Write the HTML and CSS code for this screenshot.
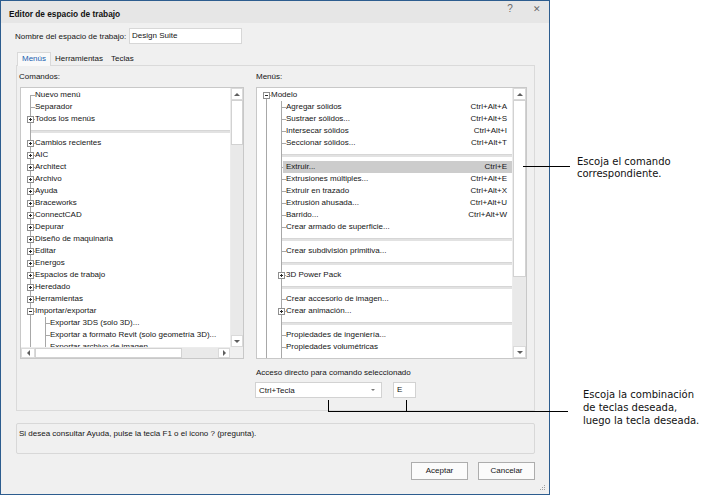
FILE: index.html
```html
<!DOCTYPE html>
<html lang="es">
<head>
<meta charset="utf-8">
<title>Editor de espacio de trabajo</title>
<link rel="stylesheet" href="styles.css">
</head>
<body>
<div class="page">
  <div class="dialog">
    <div class="titlebar">
      <span class="title">Editor de espacio de trabajo</span>
      <span class="tb-btn">?</span>
      <span class="tb-btn close">✕</span>
    </div>
    <div class="content">
      <div class="name-row">
        <span class="name-label">Nombre del espacio de trabajo:</span>
        <div class="input">Design Suite</div>
      </div>
      <div class="tabs">
        <span class="tab active">Menús</span>
        <span class="tab">Herramientas</span>
        <span class="tab">Teclas</span>
      </div>
      <div class="panel">
        <div class="col col-left">
          <div class="cap">Comandos:</div>
          <div class="tree tree-left">
            <div class="view">
              <div class="r"><span class="c first"></span><span class="t">Nuevo menú</span></div>
              <div class="r"><span class="c"></span><span class="t">Separador</span></div>
              <div class="r"><span class="c"><i class="bx plus"></i></span><span class="t">Todos los menús</span></div>
              <div class="r"><span class="v"></span><span class="sl"></span></div>
              <div class="r"><span class="c"><i class="bx plus"></i></span><span class="t">Cambios recientes</span></div>
              <div class="r"><span class="c"><i class="bx plus"></i></span><span class="t">AIC</span></div>
              <div class="r"><span class="c"><i class="bx plus"></i></span><span class="t">Architect</span></div>
              <div class="r"><span class="c"><i class="bx plus"></i></span><span class="t">Archivo</span></div>
              <div class="r"><span class="c"><i class="bx plus"></i></span><span class="t">Ayuda</span></div>
              <div class="r"><span class="c"><i class="bx plus"></i></span><span class="t">Braceworks</span></div>
              <div class="r"><span class="c"><i class="bx plus"></i></span><span class="t">ConnectCAD</span></div>
              <div class="r"><span class="c"><i class="bx plus"></i></span><span class="t">Depurar</span></div>
              <div class="r"><span class="c"><i class="bx plus"></i></span><span class="t">Diseño de maquinaria</span></div>
              <div class="r"><span class="c"><i class="bx plus"></i></span><span class="t">Editar</span></div>
              <div class="r"><span class="c"><i class="bx plus"></i></span><span class="t">Energos</span></div>
              <div class="r"><span class="c"><i class="bx plus"></i></span><span class="t">Espacios de trabajo</span></div>
              <div class="r"><span class="c"><i class="bx plus"></i></span><span class="t">Heredado</span></div>
              <div class="r"><span class="c"><i class="bx plus"></i></span><span class="t">Herramientas</span></div>
              <div class="r"><span class="c"><i class="bx minus"></i></span><span class="t">Importar/exportar</span></div>
              <div class="r"><span class="p"></span><span class="c"></span><span class="t">Exportar 3DS (solo 3D)...</span></div>
              <div class="r"><span class="p"></span><span class="c"></span><span class="t">Exportar a formato Revit (solo geometría 3D)...</span></div>
              <div class="r"><span class="p"></span><span class="c"></span><span class="t">Exportar archivo de imagen...</span></div>
            </div>
            <div class="vs">
              <span class="sb up"></span>
              <span class="th th-left"></span>
              <span class="tr"></span>
              <span class="sb dn"></span>
            </div>
            <div class="hs">
              <span class="sb lf"></span>
              <span class="th th-h"></span>
              <span class="tr"></span>
              <span class="sb rt"></span>
            </div>
            <div class="corner"></div>
          </div>
        </div>
        <div class="col col-right">
          <div class="cap">Menús:</div>
          <div class="tree tree-right">
            <div class="view">
              <div class="r"><span class="c first"><i class="bx minus"></i></span><span class="t">Modelo</span></div>
              <div class="r"><span class="p"></span><span class="c"></span><span class="t">Agregar sólidos<span class="k">Ctrl+Alt+A</span></span></div>
              <div class="r"><span class="p"></span><span class="c"></span><span class="t">Sustraer sólidos...<span class="k">Ctrl+Alt+S</span></span></div>
              <div class="r"><span class="p"></span><span class="c"></span><span class="t">Intersecar sólidos<span class="k">Ctrl+Alt+I</span></span></div>
              <div class="r"><span class="p"></span><span class="c"></span><span class="t">Seccionar sólidos...<span class="k">Ctrl+Alt+T</span></span></div>
              <div class="r"><span class="p"></span><span class="v"></span><span class="sl"></span></div>
              <div class="r"><span class="p"></span><span class="c"></span><span class="t sel">Extruir...<span class="k">Ctrl+E</span></span></div>
              <div class="r"><span class="p"></span><span class="c"></span><span class="t">Extrusiones múltiples...<span class="k">Ctrl+Alt+E</span></span></div>
              <div class="r"><span class="p"></span><span class="c"></span><span class="t">Extruir en trazado<span class="k">Ctrl+Alt+X</span></span></div>
              <div class="r"><span class="p"></span><span class="c"></span><span class="t">Extrusión ahusada...<span class="k">Ctrl+Alt+U</span></span></div>
              <div class="r"><span class="p"></span><span class="c"></span><span class="t">Barrido...<span class="k">Ctrl+Alt+W</span></span></div>
              <div class="r"><span class="p"></span><span class="c"></span><span class="t">Crear armado de superficie...</span></div>
              <div class="r"><span class="p"></span><span class="v"></span><span class="sl"></span></div>
              <div class="r"><span class="p"></span><span class="c"></span><span class="t">Crear subdivisión primitiva...</span></div>
              <div class="r"><span class="p"></span><span class="v"></span><span class="sl"></span></div>
              <div class="r"><span class="p"></span><span class="c"><i class="bx plus"></i></span><span class="t">3D Power Pack</span></div>
              <div class="r"><span class="p"></span><span class="v"></span><span class="sl"></span></div>
              <div class="r"><span class="p"></span><span class="c"></span><span class="t">Crear accesorio de imagen...</span></div>
              <div class="r"><span class="p"></span><span class="c"><i class="bx plus"></i></span><span class="t">Crear animación...</span></div>
              <div class="r"><span class="p"></span><span class="v"></span><span class="sl"></span></div>
              <div class="r"><span class="p"></span><span class="c"></span><span class="t">Propiedades de ingeniería...</span></div>
              <div class="r"><span class="p"></span><span class="c"></span><span class="t">Propiedades volumétricas</span></div>
              <div class="r"><span class="p"></span><span class="v"></span></div>
            </div>
            <div class="vs">
              <span class="sb up"></span>
              <span class="th th-right"></span>
              <span class="tr"></span>
              <span class="sb dn"></span>
            </div>
          </div>
          <div class="acc-cap">Acceso directo para comando seleccionado</div>
          <div class="sc-row">
            <div class="combo"><span>Ctrl+Tecla</span><span class="combo-arrow"></span></div>
            <div class="keybox">E</div>
          </div>
        </div>
      </div>
      <div class="helpbox">Si desea consultar Ayuda, pulse la tecla F1 o el icono ? (pregunta).</div>
      <div class="buttons">
        <div class="btn">Aceptar</div>
        <div class="btn">Cancelar</div>
      </div>
    </div>
    <svg class="grip" width="7" height="7" viewBox="0 0 7 7">
      <rect x="5" y="1" width="1" height="1" fill="#a0a0a0"/>
      <rect x="3" y="3" width="1" height="1" fill="#a0a0a0"/>
      <rect x="5" y="3" width="1" height="1" fill="#a0a0a0"/>
      <rect x="1" y="5" width="1" height="1" fill="#a0a0a0"/>
      <rect x="3" y="5" width="1" height="1" fill="#a0a0a0"/>
      <rect x="5" y="5" width="1" height="1" fill="#a0a0a0"/>
    </svg>
  </div>

  <div class="lead1"></div>
  <div class="note note1">Escoja el comando<br>correspondiente.</div>
  <div class="bracket"></div>
  <div class="lead2"></div>
  <div class="note note2">Escoja la combinación<br>de teclas deseada,<br>luego la tecla deseada.</div>
</div>
</body>
</html>
```

FILE: styles.css
```css
* { box-sizing: border-box; }
body {
  margin: 0;
  background: #fff;
  font-family: "Liberation Sans", Arial, sans-serif;
  font-size: 8px;
  color: #151515;
}
.page { position: relative; width: 718px; height: 496px; }

.dialog {
  position: relative;
  width: 550px;
  height: 495px;
  border: 1px solid #2d5d8f;
  background: #f0f0f0;
  display: flex;
  flex-direction: column;
}
.titlebar {
  height: 22px;
  flex: 0 0 22px;
  background: #e6e6e6;
  display: flex;
  align-items: flex-start;
  padding-left: 8px;
  padding-right: 5px;
}
.title {
  flex: 1;
  font-weight: bold;
  font-size: 8.3px;
  line-height: 12px;
  margin-top: 7px;
  color: #111;
}
.tb-btn {
  width: 14px;
  text-align: center;
  font-size: 10px;
  line-height: 12px;
  margin-top: 2px;
  color: #6a6a6a;
}
.tb-btn.close { margin-left: 13px; font-size: 9px; }

.content {
  flex: 1;
  display: flex;
  flex-direction: column;
  padding: 5px 14px 0 15px;
}
.name-row { display: flex; align-items: center; height: 16px; }
.name-label { flex: 0 0 114px; margin-left: -1px; }
.input {
  width: 113px;
  height: 16px;
  background: #fff;
  border: 1px solid #d7d7d7;
  padding-left: 2px;
  line-height: 14px;
}

.tabs {
  display: flex;
  height: 13px;
  margin-top: 8px;
  padding-left: 1px;
  position: relative;
  z-index: 1;
}
.tab { padding: 0 4px; line-height: 13px; }
.tab.active {
  height: 14px;
  border: 1px solid #d9d9d9;
  border-bottom: none;
  background: #f9f9f9;
  color: #1a5fb0;
  line-height: 12px;
}

.panel {
  height: 346px;
  border: 1px solid #dadada;
  display: flex;
  gap: 12px;
  padding: 5px 7px 0 3px;
}
.col { display: flex; flex-direction: column; }
.cap { line-height: 12px; height: 12px; margin-bottom: 4px; }
.col-left .cap { margin-left: -1px; }

.tree {
  border: 1px solid #c8c8c8;
  background: #fff;
  display: grid;
  height: 272px;
}
.tree-left { width: 224px; grid-template-columns: 209px 13px; grid-template-rows: 259px 11px; }
.tree-right { width: 271px; grid-template-columns: 255px 14px; grid-template-rows: 270px; }

.view { overflow: hidden; padding-top: 1px; }
.r {
  display: flex;
  height: 12px;
  line-height: 12px;
  white-space: nowrap;
  padding-left: 5px;
}
.p {
  flex: 0 0 15px;
  background: linear-gradient(#a8a8a8, #a8a8a8) 4px 0 / 1px 100% no-repeat;
}
.c {
  display: block;
  flex: 0 0 9px;
  background:
    linear-gradient(#a8a8a8, #a8a8a8) 4px 0 / 1px 100% no-repeat,
    linear-gradient(#a8a8a8, #a8a8a8) 4px 6px / 5px 1px no-repeat;
}
.c.first {
  background:
    linear-gradient(#a8a8a8, #a8a8a8) 4px 6px / 1px 6px no-repeat,
    linear-gradient(#a8a8a8, #a8a8a8) 4px 6px / 5px 1px no-repeat;
}
.v {
  flex: 0 0 5px;
  background: linear-gradient(#a8a8a8, #a8a8a8) 4px 0 / 1px 100% no-repeat;
}
.sl {
  flex: 1;
  align-self: center;
  height: 3px;
  background: #e2e2e2;
  border-top: 1px solid #d6d6d6;
}
.bx {
  display: block;
  width: 7px;
  height: 7px;
  margin: 3px 0 0 1px;
  border: 1px solid #8f8f8f;
  background-color: #fff;
}
.bx.plus {
  background-image:
    linear-gradient(#2a2a2a, #2a2a2a),
    linear-gradient(#2a2a2a, #2a2a2a);
  background-size: 3px 1px, 1px 3px;
  background-position: 1px 2px, 2px 1px;
  background-repeat: no-repeat;
}
.bx.minus {
  background-image: linear-gradient(#2a2a2a, #2a2a2a);
  background-size: 3px 1px;
  background-position: 1px 2px;
  background-repeat: no-repeat;
}
.t {
  flex: 1;
  display: flex;
  justify-content: space-between;
  padding-right: 5px;
  overflow: hidden;
}
.t.sel { background: #cccccc; margin-left: -3px; padding-left: 3px; }

/* scrollbars */
.vs {
  display: flex;
  flex-direction: column;
  background: #e9e9e9;
  border-left: 1px solid #ececec;
}
.hs {
  display: flex;
  background: #e9e9e9;
  border-top: 1px solid #ececec;
}
.corner { background: #f0f0f0; }
.sb {
  display: flex;
  align-items: center;
  justify-content: center;
  background: #fff;
  border: 1px solid #dadada;
}
.vs .sb { height: 12px; flex: 0 0 12px; }
.hs .sb.lf { width: 14px; flex: 0 0 14px; }
.hs .sb.rt { width: 12px; flex: 0 0 12px; }
.sb::after { content: ""; width: 0; height: 0; }
.sb.up::after { border-left: 3px solid transparent; border-right: 3px solid transparent; border-bottom: 3px solid #5f5f5f; }
.sb.dn::after { border-left: 3px solid transparent; border-right: 3px solid transparent; border-top: 3px solid #5f5f5f; }
.sb.lf::after { border-top: 3px solid transparent; border-bottom: 3px solid transparent; border-right: 3px solid #5f5f5f; }
.sb.rt::after { border-top: 3px solid transparent; border-bottom: 3px solid transparent; border-left: 3px solid #5f5f5f; }
.th { background: #fff; border: 1px solid #d2d2d2; }
.th-left { flex: 0 0 45px; }
.th-right { flex: 0 0 177px; }
.th-h { flex: 0 0 147px; }
.tr { flex: 1; }

.acc-cap { margin-top: 8px; line-height: 12px; }
.sc-row { display: flex; gap: 11px; margin-top: 3px; margin-left: -1px; }
.combo {
  width: 127px;
  height: 16px;
  background: #fff;
  border: 1px solid #d2d2d2;
  display: flex;
  align-items: center;
  justify-content: space-between;
  padding: 0 6px 0 3px;
}
.combo-arrow {
  width: 0; height: 0;
  border-left: 2px solid transparent;
  border-right: 2px solid transparent;
  border-top: 2px solid #7a7a7a;
}
.keybox {
  width: 23px;
  height: 16px;
  background: #fff;
  border: 1px solid #d2d2d2;
  padding-left: 3px;
  line-height: 14px;
}

.helpbox {
  margin-top: 12px;
  height: 31px;
  border: 1px solid #d8d8d8;
  border-radius: 2px;
  padding: 4px 2px;
  line-height: 12px;
}
.buttons { display: flex; justify-content: flex-end; gap: 10px; margin-top: 8px; }
.btn {
  width: 57px;
  height: 18px;
  border: 1px solid #adadad;
  background: #fbfbfb;
  text-align: center;
  line-height: 16px;
}
.grip { position: absolute; right: 3px; bottom: 3px; }

/* annotations */
.note {
  position: absolute;
  font-family: "DejaVu Sans", Verdana, sans-serif;
  font-size: 10px;
  color: #111;
  white-space: nowrap;
}
.note1 { left: 577px; top: 156px; line-height: 12px; }
.note2 { left: 583px; top: 388px; line-height: 13px; }
.lead1 { position: absolute; left: 523px; top: 166px; width: 47px; height: 1px; background: #000; }
.bracket {
  position: absolute;
  left: 328px; top: 400px;
  width: 79px; height: 12px;
  border: 1px solid #000;
  border-top: none;
}
.lead2 { position: absolute; left: 406px; top: 411px; width: 162px; height: 1px; background: #000; }
```
